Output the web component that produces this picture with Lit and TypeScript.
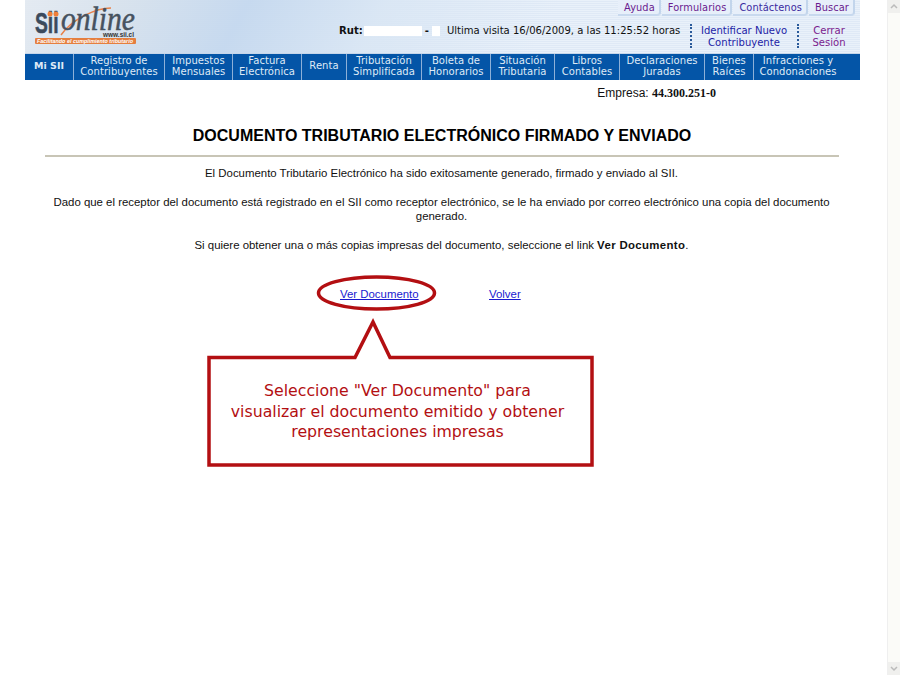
import { LitElement, html, css, svg } from "lit";
import { customElement } from "lit/decorators.js";

const NAV: [string, number][] = [
  ["Mi SII", 49],
  ["Registro de|Contribuyentes", 91],
  ["Impuestos|Mensuales", 68],
  ["Factura|Electrónica", 69],
  ["Renta", 45],
  ["Tributación|Simplificada", 75],
  ["Boleta de|Honorarios", 69],
  ["Situación|Tributaria", 64],
  ["Libros|Contables", 65],
  ["Declaraciones|Juradas", 85],
  ["Bienes|Raíces", 49],
  ["Infracciones y|Condonaciones", 106],
];

@customElement("app-root")
export class AppRoot extends LitElement {
  static styles = css`
    :host { display: block; width: 900px; height: 675px; background: #fff; overflow: hidden; font-family: "Liberation Sans", Arial, sans-serif; }
    .page { display: flex; height: 675px; }
    .main { width: 887px; flex: none; padding: 0 27px 0 25px; box-sizing: border-box; }
    .scroll { width: 13px; flex: none; background: #fbfbf8; border-left: 1px solid #efefef; box-sizing: border-box; display: flex; flex-direction: column; justify-content: space-between; }
    .scroll svg { display: block; }
    .top { height: 53px; display: flex; position: relative; overflow: hidden; background-color: #e6eff9; background-image: repeating-linear-gradient(0deg, #e9f1fa 0 1px, #dfe9f6 1px 2px); }
    .wash { position: absolute; inset: 0; background: linear-gradient(118deg, #e4eaf1 0, #d6e1ec 12%, #c3d7ee 26%, #d9e6f4 42%, rgba(232,240,250,0) 62%); opacity: .9; }
    .logo { position: absolute; left: 0; top: 0; }
    .tabs { position: absolute; top: 0; right: 5px; display: flex; font: 9.8px "DejaVu Sans", Verdana, sans-serif; color: #6a1b8f; }
    .tab { height: 14px; line-height: 15px; padding: 0 4px 0 6px; margin-left: 1px; background: #e7effa; border-right: 2px solid #c2d5ec; border-bottom: 2px solid #c8d9ee; border-radius: 0 0 4px 0; letter-spacing: .1px; white-space: nowrap; }
    .tab.c { color: #3a2aa0; }
    .info { position: absolute; left: 0; right: 0; top: 24px; height: 25px; display: flex; font: 10.05px "DejaVu Sans", Verdana, sans-serif; color: #111; }
    .rut { position: absolute; left: 314px; top: 0; white-space: nowrap; line-height: 14px; display: flex; align-items: center; }
    .rut b { margin-right: 1px; }
    .mask { display: inline-block; height: 10px; background: #fff; }
    .dash { font-weight: bold; margin: 0 3px; }
    .visit { margin-left: 7px; }
    .action { position: absolute; top: 1px; text-align: center; line-height: 12px; white-space: nowrap; }
    .a1 { left: 669px; width: 100px; color: #1d1da6; }
    .a2 { left: 776px; width: 56px; color: #7b1c8e; }
    .dots { position: absolute; top: 0; height: 24px; border-left: 2px dotted #2a5a9a; }
    nav { display: flex; height: 27px; background: #0455a7; color: #dfeaf6; font: 10px/11.5px "DejaVu Sans", Verdana, sans-serif; border-top: 1px solid #c6d6ea; box-sizing: border-box; }
    nav div { box-sizing: border-box; flex: none; display: flex; flex-direction: column; align-items: center; justify-content: center; text-align: center; border-right: 1px solid #8db0d8; letter-spacing: .05px; white-space: nowrap; padding-bottom: 2px; }
    nav div:last-child { border-right: 0; padding-right: 18px; }
    nav div.home { font-weight: bold; font-size: 9.5px; }
    .emp { height: 26px; text-align: right; padding-right: 144px; font-size: 12px; line-height: 26px; color: #111; }
    .emp b { font-family: "Liberation Serif", serif; }
    h1 { margin: 20px 0 0; padding-right: 1px; font-size: 16px; line-height: 20px; font-weight: bold; text-align: center; color: #000; }
    hr { margin: 9px 21px 0 20px; border: 0; height: 2px; background: #c8c5b6; }
    .copy { margin: 9px 22px 0 20px; font-size: 11.42px; line-height: 14.5px; text-align: center; color: #111; }
    .copy p { margin: 0 0 14px; }
    .copy p b { letter-spacing: .35px; }
    .links { position: relative; height: 190px; margin-top: 21px; font-size: 11.42px; }
    .links a { position: absolute; top: 15px; color: #1a1ad0; text-decoration: underline; }
    .annot { position: absolute; left: 0; top: 0; pointer-events: none; }
    .note { position: absolute; left: 183px; top: 89px; width: 379px; text-align: center; font: 15.75px/20.5px "DejaVu Sans", Verdana, sans-serif; color: #b30f12; padding-top: 19px; box-sizing: border-box; }
  `;

  private logo() {
    return svg`<svg class="logo" width="130" height="53" viewBox="0 0 130 53">
      <path d="M36 35 C 48 18 72 8 86 8" fill="none" stroke="#e8814a" stroke-width="1.500"/>
      <text x="10" y="33" font-family="Liberation Sans" font-weight="bold" font-size="30" fill="#3b4a5c" stroke="#3b4a5c" stroke-width=".6" textLength="23.500" lengthAdjust="spacingAndGlyphs">Sii</text>
      <circle cx="25" cy="14" r="2.500" fill="#ef7f3a"/><circle cx="31" cy="14" r="2.500" fill="#ef7f3a"/>
      <text x="36" y="30" font-family="Liberation Serif" font-style="italic" font-size="34" fill="#46525f" stroke="#46525f" stroke-width=".5" textLength="74" lengthAdjust="spacingAndGlyphs">online</text>
      <text x="78" y="36.500" font-family="Liberation Sans" font-weight="bold" font-size="6.500" fill="#333" textLength="31" lengthAdjust="spacingAndGlyphs">www.sii.cl</text>
      <rect x="10" y="38" width="101" height="6" rx="1" fill="#e57f3f"/>
      <text x="12" y="43" font-family="Liberation Sans" font-style="italic" font-weight="bold" font-size="5.200" fill="#fff" textLength="96" lengthAdjust="spacingAndGlyphs">Facilitando el cumplimiento tributario</text>
    </svg>`;
  }

  render() {
    return html`<div class="page">
      <div class="main">
        <div class="top">
          <div class="wash"></div>
          ${this.logo()}
          <div class="tabs">
            <span class="tab">Ayuda</span><span class="tab">Formularios</span><span class="tab c">Contáctenos</span><span class="tab">Buscar</span>
          </div>
          <div class="info">
            <div class="rut"><b>Rut:</b><span class="mask" style="width:58px"></span><span class="dash">-</span><span class="mask" style="width:8px"></span><span class="visit">Ultima visita 16/06/2009, a las 11:25:52 horas</span></div>
            <span class="dots" style="left:665px"></span>
            <div class="action a1">Identificar Nuevo<br />Contribuyente</div>
            <span class="dots" style="left:772px"></span>
            <div class="action a2">Cerrar<br />Sesión</div>
          </div>
        </div>
        <nav>
          ${NAV.map(([t, w], i) => html`<div class=${i === 0 ? "home" : ""} style="width:${w}px">${t.split("|").map((l) => html`<span>${l}</span>`)}</div>`)}
        </nav>
        <div class="emp">Empresa: <b>44.300.251-0</b></div>
        <h1>DOCUMENTO TRIBUTARIO ELECTRÓNICO FIRMADO Y ENVIADO</h1>
        <hr />
        <div class="copy">
          <p>El Documento Tributario Electrónico ha sido exitosamente generado, firmado y enviado al SII.</p>
          <p>Dado que el receptor del documento está registrado en el SII como receptor electrónico, se le ha enviado por correo electrónico una copia del documento generado.</p>
          <p>Si quiere obtener una o más copias impresas del documento, seleccione el link <b>Ver Documento</b>.</p>
        </div>
        <div class="links">
          <a style="left:315px">Ver Documento</a>
          <a style="left:464px">Volver</a>
          <svg class="annot" width="600" height="200" viewBox="0 0 600 200">
            <ellipse cx="351.500" cy="20" rx="58" ry="16" fill="none" stroke="#b30f12" stroke-width="3.500"/>
            <path d="M184 84.500 H 330 L 348 49 L 365 84.500 H 567 V 192 H 184 Z" fill="none" stroke="#b30f12" stroke-width="3.500"/>
          </svg>
          <div class="note">Seleccione "Ver Documento" para<br />visualizar el documento emitido y obtener<br />representaciones impresas</div>
        </div>
      </div>
      <div class="scroll">
        <svg width="12" height="13" viewBox="0 0 12 13"><rect width="12" height="13" fill="#f0f0ee"/><path d="M3 8 L6 5 L9 8" fill="none" stroke="#bbb" stroke-width="1.500"/></svg>
        <svg width="12" height="13" viewBox="0 0 12 13"><rect width="12" height="13" fill="#f0f0ee"/><path d="M3 5 L6 8 L9 5" fill="none" stroke="#bbb" stroke-width="1.500"/></svg>
      </div>
    </div>`;
  }
}
